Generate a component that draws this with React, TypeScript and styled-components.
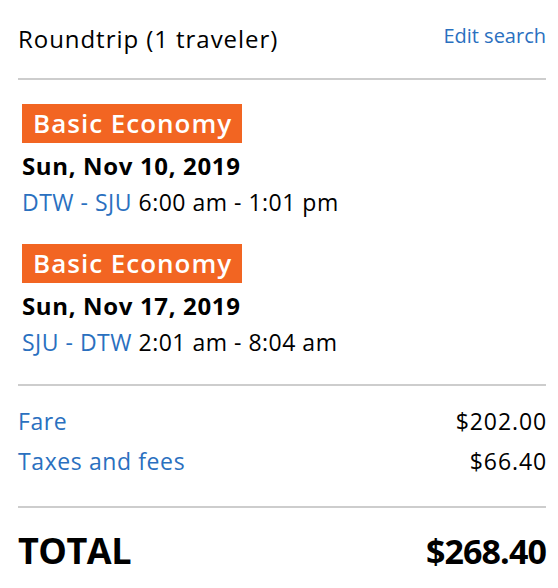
import React from 'react'
import styled, { createGlobalStyle } from 'styled-components'

const GlobalStyle = createGlobalStyle`
  html, body {
    margin: 0;
    padding: 0;
    background: #fff;
  }
  body {
    font-family: "Open Sans", "Noto Sans", sans-serif;
    color: #000;
  }
`

const Summary = styled.div`
  width: 558px;
  box-sizing: border-box;
  padding: 0 12px 0 18px;
`

const Section = styled.div<{ $top: number; $bottom: number; $last?: boolean }>`
  padding-top: ${p => p.$top}px;
  padding-bottom: ${p => p.$bottom}px;
  border-bottom: ${p => (p.$last ? 'none' : '2px solid #cdcdcd')};
`

const Header = styled.div`
  display: flex;
  justify-content: space-between;
  align-items: flex-start;
`

const Title = styled.div`
  font-size: 24px;
  line-height: 32px;
  letter-spacing: 0.95px;
`

const EditLink = styled.a`
  font-size: 20px;
  line-height: 26px;
  color: #2a70bf;
  text-decoration: none;
  cursor: pointer;
`

const Segment = styled.div`
  margin-left: 4px;
  & + & {
    margin-top: 27px;
  }
`

const Badge = styled.div`
  display: inline-block;
  background: #f26522;
  color: #fff;
  font-size: 26px;
  font-weight: 600;
  line-height: 35px;
  letter-spacing: 1px;
  height: 39px;
  box-sizing: border-box;
  padding: 2px 10px 2px 11px;
`

const FlightDate = styled.div`
  margin-top: 8px;
  font-size: 24px;
  font-weight: 700;
  line-height: 30px;
  letter-spacing: 0.65px;
`

const Route = styled.div`
  margin-top: 6px;
  font-size: 23px;
  line-height: 30px;
  letter-spacing: 0.5px;
`

const Blue = styled.span`
  color: #2a70bf;
`

const PriceRow = styled.div`
  display: flex;
  justify-content: space-between;
  font-size: 23px;
  line-height: 40px;
  letter-spacing: 0.6px;
`

const Amount = styled.span`
  letter-spacing: 0.9px;
  margin-right: -1px;
`

const TotalRow = styled.div`
  display: flex;
  justify-content: space-between;
  align-items: baseline;
  font-size: 36px;
  font-weight: 700;
  line-height: 50px;
  letter-spacing: -0.5px;
`

const TotalAmount = styled.span`
  font-size: 34px;
  font-weight: 700;
  letter-spacing: -0.9px;
`

const segments = [
  { date: 'Sun, Nov 10, 2019', route: 'DTW - SJU', time: '6:00 am - 1:01 pm' },
  { date: 'Sun, Nov 17, 2019', route: 'SJU - DTW', time: '2:01 am - 8:04 am' },
]

const prices = [
  { label: 'Fare', value: '$202.00' },
  { label: 'Taxes and fees', value: '$66.40' },
]

export default function App() {
  return (
    <>
      <GlobalStyle />
      <Summary>
        <Section $top={23} $bottom={23}>
          <Header>
            <Title>Roundtrip (1 traveler)</Title>
            <EditLink>Edit search</EditLink>
          </Header>
        </Section>
        <Section $top={24} $bottom={27}>
          {segments.map(s => (
            <Segment key={s.date}>
              <Badge>Basic Economy</Badge>
              <FlightDate>{s.date}</FlightDate>
              <Route>
                <Blue>{s.route}</Blue> {s.time}
              </Route>
            </Segment>
          ))}
        </Section>
        <Section $top={15} $bottom={25}>
          {prices.map(p => (
            <PriceRow key={p.label}>
              <Blue>{p.label}</Blue>
              <Amount>{p.value}</Amount>
            </PriceRow>
          ))}
        </Section>
        <Section $top={18} $bottom={0} $last>
          <TotalRow>
            <span>TOTAL</span>
            <TotalAmount>$268.40</TotalAmount>
          </TotalRow>
        </Section>
      </Summary>
    </>
  )
}
